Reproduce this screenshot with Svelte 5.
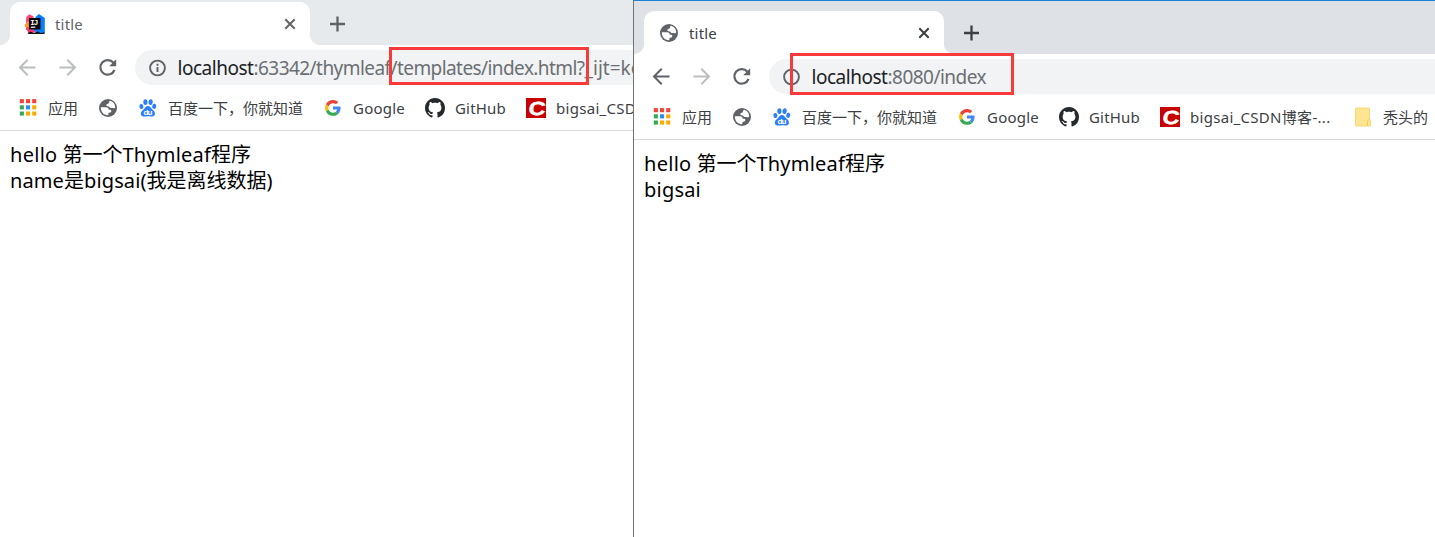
<script>
  const windows = [
    {
      id: 'offline',
      favicon: 'idea',
      backEnabled: false,
      shown: 6,
      url: [
        { text: 'localhost', width: 76, host: true },
        { text: ':63342/thymleaf', width: 137 },
        { text: '/templates/index.html?', width: 194 },
        { text: '_ijt=ke', width: 57 }
      ],
      lines: [
        [['hello', 47.5], [' ', 5], ['第一个', 60], ['Thymleaf', 88.5], ['程序', 40]],
        [['name', 54], ['是', 20], ['bigsai', 56.5], ['(', 6], ['我是离线数据', 120], [')', 6]]
      ]
    },
    {
      id: 'served',
      favicon: 'globe',
      backEnabled: true,
      shown: 7,
      url: [
        { text: 'localhost', width: 76, host: true },
        { text: ':8080/index', width: 98.5 }
      ],
      lines: [
        [['hello', 47.5], [' ', 5], ['第一个', 60], ['Thymleaf', 88.5], ['程序', 40]],
        [['bigsai', 57]]
      ]
    }
  ];

  const bookmarks = [
    { icon: 'apps', text: '应用', width: 30 },
    { icon: 'globe', text: '', width: 0 },
    { icon: 'baidu', text: '百度一下，你就知道', width: 135 },
    { icon: 'google', text: 'Google', width: 52 },
    { icon: 'github', text: 'GitHub', width: 51 },
    { icon: 'csdn', text: 'bigsai_CSDN博客-...', width: 143, fit: 140.5 },
    { icon: 'folder', text: '秃头的', width: 45 }
  ];

  const appColors = ['#f44336', '#f44336', '#f44336', '#34a853', '#2b8cf0', '#fbab00', '#34a853', '#fbab00', '#fbab00'];

  // Spreads the letter spacing so that a run takes exactly the given advance.
  function fit(node, width) {
    const natural = node.getBoundingClientRect().width;
    const count = [...node.textContent].length;
    if (count && width) node.style.letterSpacing = `${(width - natural) / count}px`;
  }
</script>

{#snippet icon(name)}
  {#if name === 'apps'}
    <svg width="20" height="20" viewBox="0 0 20 20">
      {#each appColors as color, i}
        <rect x={1.800 + (i % 3) * 6.200} y={1.100 + Math.floor(i / 3) * 6.200} width="4.100" height="4.100" fill={color} />
      {/each}
    </svg>
  {:else if name === 'globe'}
    <svg width="20" height="20" viewBox="0 0 20 20">
      <circle cx="10" cy="10" r="9" fill="#5f6368" />
      <path fill="#fff" d="M11.800 2.800c3.300.7 5.400 3.500 5.400 6.600-.6.900-1.600 1.200-2.400.7-.8-.5-1.200.1-2-.1-1.400-.3-.9-1.500-2.200-1.600-1.500 0-2.400-.3-2.300-1.400.1-1.100 1.500-.9 2.200-1.500.8-.7.4-1.800 1.300-2.700z" />
      <path fill="#fff" d="M2.800 9.300h5.300c1.700 0 2.700 1.200 2.700 2.500h1.500c1.200 0 1.400 1.800.5 2.500-.7.500-2.500.3-2.500 1.400v1.600c-4.400.2-7.600-3.500-7.500-8z" />
    </svg>
  {:else if name === 'baidu'}
    <svg width="20" height="20" viewBox="0 0 20 20" fill="#2d7ff9">
      <ellipse cx="7.400" cy="4.100" rx="2.100" ry="2.900" />
      <ellipse cx="12.600" cy="4.100" rx="2.100" ry="2.900" transform="rotate(8 12.6 4.1)" />
      <ellipse cx="3.400" cy="8.500" rx="2" ry="2.600" transform="rotate(-12 3.4 8.5)" />
      <ellipse cx="16.200" cy="8.300" rx="2" ry="2.600" transform="rotate(12 16.2 8.3)" />
      <path d="M10 8c2 0 2.600 1.700 4.100 3.200 1.600 1.500 3.200 2.500 2.900 4.900-.3 2-2 2.600-3.700 2.500-1.300-.1-2.200-.3-3.400-.3s-2.100.3-3.400.3c-1.900 0-3.500-.7-3.700-2.700-.2-2.200 1.500-3.200 3-4.700C7.400 9.700 8 8 10 8z" />
      <text class="logo-text" x="5.400" y="17" font-size="8" textLength="9" fill="#fff">du</text>
    </svg>
  {:else if name === 'google'}
    <svg width="20" height="20" viewBox="0 0 48 48">
      <g transform="translate(5 4.800) scale(.79)">
        <path fill="#ea4335" d="M24 9.500c3.540 0 6.710 1.220 9.210 3.600l6.850-6.850C35.900 2.380 30.470 0 24 0 14.620 0 6.510 5.380 2.560 13.220l7.980 6.190C12.430 13.720 17.740 9.500 24 9.500z" />
        <path fill="#4285f4" d="M46.980 24.550c0-1.570-.15-3.090-.38-4.550H24v9.020h12.940c-.58 2.960-2.260 5.480-4.780 7.180l7.730 6c4.510-4.180 7.090-10.360 7.090-17.650z" />
        <path fill="#fbbc05" d="M10.530 28.590c-.48-1.450-.76-2.990-.76-4.590s.27-3.140.76-4.590l-7.980-6.190C.92 16.460 0 20.120 0 24c0 3.880.92 7.540 2.560 10.780l7.970-6.190z" />
        <path fill="#34a853" d="M24 48c6.480 0 11.930-2.130 15.890-5.810l-7.730-6c-2.150 1.450-4.920 2.300-8.160 2.300-6.260 0-11.570-4.220-13.470-9.910l-7.980 6.190C6.510 42.620 14.620 48 24 48z" />
      </g>
    </svg>
  {:else if name === 'github'}
    <svg width="20" height="20" viewBox="0 0 16 16">
      <path fill="#24292e" d="M8 0C3.580 0 0 3.580 0 8c0 3.540 2.290 6.530 5.470 7.590.4.070.55-.17.55-.38 0-.19-.01-.82-.01-1.490-2.010.37-2.530-.49-2.690-.94-.09-.23-.48-.94-.82-1.130-.28-.15-.68-.52-.01-.53.63-.01 1.080.58 1.230.82.72 1.210 1.870.87 2.330.66.07-.52.28-.87.51-1.070-1.780-.2-3.640-.89-3.640-3.950 0-.87.31-1.590.82-2.150-.08-.2-.36-1.020.08-2.120 0 0 .67-.21 2.200.82.64-.18 1.320-.27 2-.27.68 0 1.360.09 2 .27 1.530-1.040 2.200-.82 2.200-.82.44 1.100.16 1.920.08 2.120.51.56.82 1.270.82 2.150 0 3.070-1.870 3.750-3.650 3.950.29.25.54.73.54 1.480 0 1.070-.01 1.930-.01 2.200 0 .21.15.46.55.38A8.013 8.013 0 0 0 16 8c0-4.420-3.580-8-8-8z" />
    </svg>
  {:else if name === 'csdn'}
    <svg width="20" height="20" viewBox="0 0 20 20">
      <rect width="20" height="20" fill="#c90000" />
      <text class="logo-text" transform="translate(2 17) skewX(-7) scale(1.220 1)" font-size="19" stroke="#fff" stroke-width=".5" fill="#fff">C</text>
    </svg>
  {:else if name === 'folder'}
    <svg width="20" height="20" viewBox="0 0 20 20">
      <path d="M3.500 1h12a1 1 0 0 1 1 1v10.500l1.200.8v4.700a1 1 0 0 1-1 1H3.500a1 1 0 0 1-1-1V2a1 1 0 0 1 1-1z" fill="#ffe591" stroke="#f7d774" />
      <path d="M16.500 12.500c-1.700.3-2 1.500-2 3v3.200" fill="none" stroke="#efc94f" />
    </svg>
  {:else}
    <svg width="22" height="22" viewBox="0 0 22 22">
      <path fill="#ff4370" d="M2.200 4.200l3-3 4.300 2.300v14l-3.500 2-4-3z" />
      <path fill="#ff9a1f" d="M.8 11.500l4-3.500v8l-4-2.500z" />
      <path fill="#fb3b78" d="M3 14l7 2 3 3-9 1.500z" />
      <path fill="#087cfa" d="M11.500 4l3.500-3 5.800 4v15l-5 .5-6-3z" />
      <rect x="5" y="5" width="11.500" height="11.500" fill="#080808" />
      <text class="mono" x="6.300" y="11.500" font-size="7.500" textLength="8" fill="#fff">IJ</text>
      <rect x="6.800" y="13.600" width="4.500" height="1.200" fill="#fff" />
      <path fill="#111" d="M3.500 20.500l3-2 3.500 1.500 3.500-1.500 3 1.500 4-.5v1.500h-16z" />
    </svg>
  {/if}
{/snippet}

<main>
  {#each windows as win (win.id)}
    <section class="window {win.id}">
      <header class="strip">
        <div class="tab">
          <span class="favicon">{@render icon(win.favicon)}</span>
          <span class="title"><span use:fit={28}>title</span></span>
          <svg class="close" width="12" height="12" viewBox="0 0 12 12"><path d="M1.300 1.300l9.400 9.400M10.700 1.300l-9.400 9.400" /></svg>
        </div>
        <svg class="plus" width="16" height="16" viewBox="0 0 16 16"><path d="M8.500 .5v15M1 8h15" /></svg>
      </header>

      <nav class="toolbar">
        <svg class="nav-icon" class:disabled={!win.backEnabled} width="20" height="20" viewBox="0 0 20 20"><path d="M17.500 9.500H2.500M9.700 1.800L2 9.500l7.700 7.700" /></svg>
        <svg class="nav-icon disabled" width="20" height="20" viewBox="0 0 20 20"><path d="M1.500 9.500H16.500M9.300 1.800L17 9.500l-7.700 7.700" /></svg>
        <svg class="nav-icon" width="20" height="20" viewBox="0 0 20 20">
          <path d="M15.400 4.800A7.300 7.300 0 1 0 16.500 12" />
          <path class="solid" d="M18.200 1.200v7h-7z" />
        </svg>
        <div class="omnibox">
          <svg class="info" width="18" height="18" viewBox="0 0 18 18">
            <circle cx="9.500" cy="9" r="7.400" />
            <path d="M9.500 8v5M9.500 4.800v2" />
          </svg>
          <span class="url">{#each win.url as part}<span class:host={part.host} use:fit={part.width}>{part.text}</span>{/each}</span>
        </div>
      </nav>

      <nav class="bookmarks">
        {#each bookmarks.slice(0, win.shown) as mark}
          <span class="bookmark">
            {@render icon(mark.icon)}
            {#if mark.text}
              <span class="label" style:width="{mark.width}px"><span use:fit={mark.fit ?? mark.width}>{mark.text}</span></span>
            {/if}
          </span>
        {/each}
      </nav>

      <article class="page">
        {#each win.lines as line}
          <p>{#each line as [text, width]}<span use:fit={width}>{text}</span>{/each}</p>
        {/each}
      </article>
      <div class="highlight"></div>
    </section>
  {/each}
</main>

<style>
  :global(body) {
    margin: 0;
    background: #fff;
  }
  main {
    display: flex;
    width: 1435px;
    height: 537px;
    overflow: hidden;
    font-family: 'Noto Sans', 'Noto Sans CJK SC', sans-serif;
    white-space: nowrap;
  }
  svg {
    display: block;
    flex: none;
  }
  .window {
    position: relative;
    box-sizing: border-box;
    flex: none;
    width: 633px;
    overflow: hidden;
    background: #fff;
    --strip: #e7eaed;
    --tab-ink: #5f6368;
  }
  .served {
    width: 802px;
    border-left: 1px solid #707478;
    border-top: 1px solid #1883d7;
    --strip: #dee1e6;
    --tab-ink: #3c4043;
  }
  .strip {
    display: flex;
    align-items: center;
    box-sizing: border-box;
    height: 45px;
    padding: 2px 0 0 10px;
    background: var(--strip);
  }
  .served .strip {
    height: 53px;
    padding-top: 10px;
  }
  .tab {
    position: relative;
    display: flex;
    align-items: center;
    box-sizing: border-box;
    width: 300px;
    height: 43px;
    padding: 0 14px 0 14px;
    border-radius: 10px 10px 0 0;
    background: #fff;
  }
  .tab::before,
  .tab::after {
    content: '';
    position: absolute;
    bottom: 0;
    width: 10px;
    height: 10px;
  }
  .tab::before {
    left: -10px;
    background: radial-gradient(circle at 0 0, transparent 9.500px, #fff 10.500px);
  }
  .tab::after {
    right: -10px;
    background: radial-gradient(circle at 100% 0, transparent 9.500px, #fff 10.500px);
  }
  .favicon {
    width: 31px;
  }
  .served .favicon {
    box-sizing: border-box;
    padding-left: 1px;
  }
  .title {
    flex: 1;
    font-size: 15px;
    line-height: 20px;
    color: var(--tab-ink);
  }
  .close,
  .plus {
    fill: none;
    stroke: var(--tab-ink);
    stroke-width: 2;
  }
  .plus {
    margin-left: 19px;
    stroke-width: 2.300;
  }
  .toolbar {
    display: flex;
    align-items: center;
    height: 35px;
    padding: 5px 0 0 18px;
  }
  .nav-icon {
    margin-right: 20px;
    fill: none;
    stroke: #5f6368;
    stroke-width: 2;
  }
  .nav-icon + .nav-icon + .nav-icon {
    margin-right: 17px;
    stroke-width: 2.200;
  }
  .disabled {
    stroke: #bbbdbf;
  }
  .nav-icon .solid {
    fill: #5f6368;
    stroke: none;
  }
  .omnibox {
    display: flex;
    flex: 1;
    align-items: center;
    height: 35px;
    padding-left: 13px;
    border-radius: 18px 0 0 18px;
    background: #f1f3f4;
    min-width: 0;
  }
  .info {
    margin-right: 11.500px;
    fill: none;
    stroke: #5f6368;
    stroke-width: 1.900;
  }
  .url {
    display: flex;
    font-size: 19px;
    line-height: 26px;
    color: #6b6f73;
  }
  .host {
    color: #202124;
  }
  .bookmarks {
    display: flex;
    align-items: center;
    gap: 20px;
    height: 45px;
    padding-left: 18px;
    border-bottom: 1px solid #d5d7da;
  }
  .bookmark {
    display: flex;
    align-items: center;
    gap: 10px;
  }
  .label {
    font-size: 15px;
    line-height: 20px;
    color: #3c4043;
  }
  .page {
    padding: 11px 10px;
    font-size: 20px;
    line-height: 26px;
    color: #000;
  }
  .page p {
    display: flex;
    height: 26px;
    margin: 0;
    white-space: pre;
  }
  .highlight {
    position: absolute;
    box-sizing: border-box;
    left: 389px;
    top: 47px;
    width: 200px;
    height: 38px;
    border: 3px solid #f93a3a;
  }
  .served .highlight {
    left: 156px;
    top: 52px;
    width: 224px;
    height: 42px;
  }
  .logo-text {
    font-family: 'Liberation Sans', sans-serif;
    font-weight: 700;
  }
  .mono {
    font-family: 'Liberation Mono', monospace;
    font-weight: 700;
  }
</style>
